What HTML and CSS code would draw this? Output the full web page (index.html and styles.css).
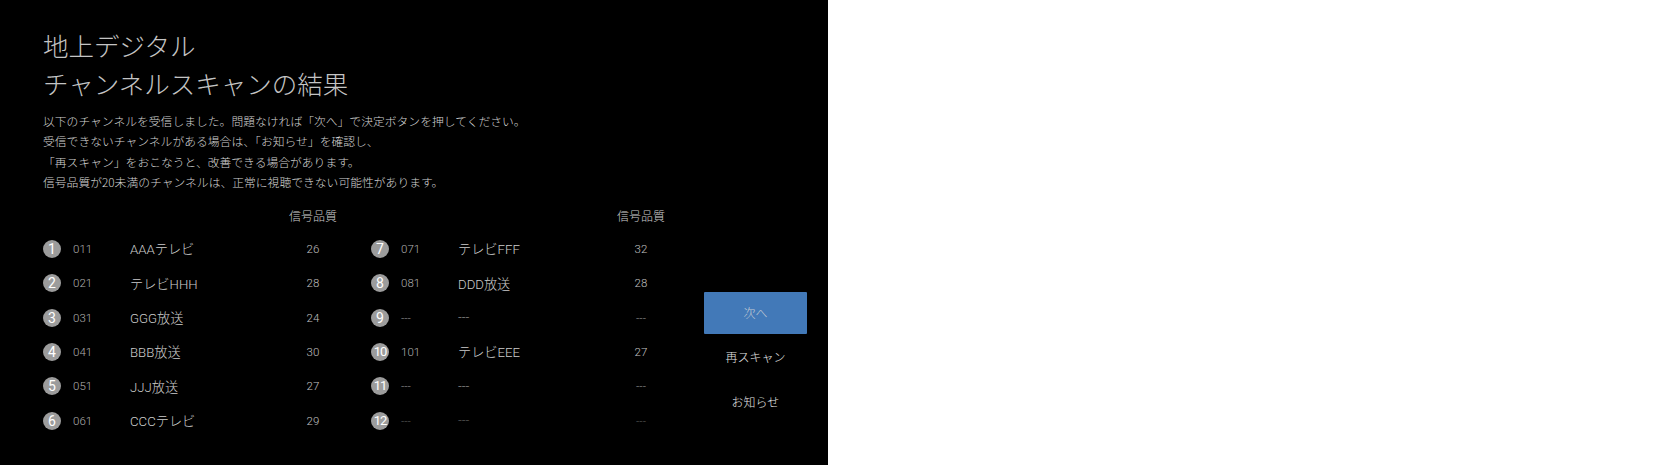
FILE: index.html
```html
<!DOCTYPE html>
<html lang="ja">
<head>
<meta charset="utf-8">
<title>チャンネルスキャンの結果</title>
<link rel="stylesheet" href="styles.css">
</head>
<body>
<div class="panel">
  <h1 class="title">地上デジタル<br>チャンネルスキャンの結果</h1>
  <p class="desc">以下のチャンネルを受信しました。問題なければ「次へ」で決定ボタンを押してください。<br>受信できないチャンネルがある場合は、「お知らせ」を確認し、<br>「再スキャン」をおこなうと、改善できる場合があります。<br>信号品質が20未満のチャンネルは、正常に視聴できない可能性があります。</p>
  <div class="lower">
    <div class="list">
      <div class="col">
        <div class="row head"><span></span><span></span><span></span><span class="q">信号品質</span></div>
        <div class="row"><span class="badge">1</span><span class="ch">011</span><span class="name">AAAテレビ</span><span class="q">26</span></div>
        <div class="row"><span class="badge">2</span><span class="ch">021</span><span class="name">テレビHHH</span><span class="q">28</span></div>
        <div class="row"><span class="badge">3</span><span class="ch">031</span><span class="name">GGG放送</span><span class="q">24</span></div>
        <div class="row"><span class="badge">4</span><span class="ch">041</span><span class="name">BBB放送</span><span class="q">30</span></div>
        <div class="row"><span class="badge">5</span><span class="ch">051</span><span class="name">JJJ放送</span><span class="q">27</span></div>
        <div class="row"><span class="badge">6</span><span class="ch">061</span><span class="name">CCCテレビ</span><span class="q">29</span></div>
      </div>
      <div class="col">
        <div class="row head"><span></span><span></span><span></span><span class="q">信号品質</span></div>
        <div class="row"><span class="badge">7</span><span class="ch">071</span><span class="name">テレビFFF</span><span class="q">32</span></div>
        <div class="row"><span class="badge">8</span><span class="ch">081</span><span class="name">DDD放送</span><span class="q">28</span></div>
        <div class="row empty"><span class="badge">9</span><span class="ch">---</span><span class="name">---</span><span class="q">---</span></div>
        <div class="row"><span class="badge two">10</span><span class="ch">101</span><span class="name">テレビEEE</span><span class="q">27</span></div>
        <div class="row empty"><span class="badge two">11</span><span class="ch">---</span><span class="name">---</span><span class="q">---</span></div>
        <div class="row empty dim"><span class="badge two">12</span><span class="ch">---</span><span class="name">---</span><span class="q">---</span></div>
      </div>
    </div>
    <div class="actions">
      <div class="btn primary">次へ</div>
      <div class="btn">再スキャン</div>
      <div class="btn">お知らせ</div>
    </div>
  </div>
</div>
</body>
</html>
```

FILE: styles.css
```css
html, body {
  margin: 0;
  padding: 0;
  background: #ffffff;
}

body {
  font-family: "Noto Sans CJK JP", "Noto Sans", sans-serif;
  font-weight: 300;
}

.panel {
  width: 828px;
  height: 465px;
  box-sizing: border-box;
  background: #000000;
  padding: 26px 0 0 43px;
  overflow: hidden;
}

.title {
  margin: 0;
  font-size: 25.5px;
  font-weight: 300;
  line-height: 38px;
  color: #c4c4c4;
}

.desc {
  margin: 9px 0 0;
  font-size: 11.8px;
  line-height: 20.4px;
  color: #d2d2d2;
  white-space: nowrap;
}

.lower {
  display: flex;
  margin-top: 7px;
}

.list {
  display: flex;
}

.col {
  width: 328px;
}

.row {
  display: grid;
  grid-template-columns: 18px 12px 57px 153px 60px;
  height: 34.4px;
  align-items: center;
  font-size: 12px;
  color: #c4c4c4;
}

.row > .badge { grid-column: 1; }
.row > .ch { grid-column: 3; }
.row > .name { grid-column: 4; }
.row > .q { grid-column: 5; text-align: center; }

.row.head {
  height: 32px;
}

.badge {
  width: 18px;
  height: 18px;
  border-radius: 50%;
  background: #9c9c9c;
  color: #ffffff;
  font-family: "Roboto", "Noto Sans", sans-serif;
  font-weight: 400;
  font-size: 14px;
  line-height: 18px;
  display: flex;
  align-items: center;
  justify-content: center;
}

.badge.two {
  font-size: 13px;
  letter-spacing: -1px;
}

.ch {
  font-family: "Roboto", "Noto Sans", sans-serif;
  font-weight: 300;
  font-size: 11.5px;
  color: #b0b0b0;
}

.row .q {
  font-family: "Roboto", "Noto Sans", sans-serif;
  font-weight: 300;
  font-size: 11.5px;
  color: #c0c0c0;
}

.row.head .q {
  font-family: "Noto Sans CJK JP", sans-serif;
  font-size: 12px;
  color: #cccccc;
}

.name {
  font-family: "Roboto", "Noto Sans CJK JP", sans-serif;
  font-size: 13.2px;
  color: #cccccc;
}

.row.empty .ch,
.row.empty .name,
.row.empty .q {
  color: #9a9a9a;
}

.row.dim .ch,
.row.dim .name,
.row.dim .q {
  color: #5e5e5e;
}

.actions {
  display: flex;
  flex-direction: column;
  margin-left: 5px;
  padding-top: 92px;
}

.btn {
  width: 103px;
  height: 45px;
  display: flex;
  align-items: center;
  justify-content: center;
  font-size: 12px;
  color: #e4e4e4;
}

.btn.primary {
  height: 42px;
  background: #4279b8;
  color: #c4cbd4;
  border-radius: 1px;
}
```
